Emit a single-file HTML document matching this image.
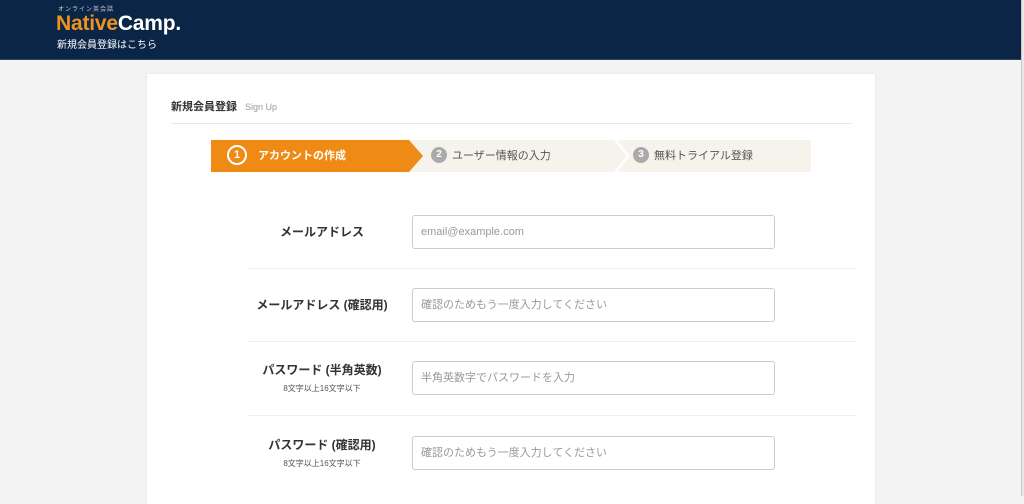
<!DOCTYPE html>
<html><head><meta charset="utf-8"><style>
*{margin:0;padding:0;box-sizing:border-box}
body{width:1024px;height:496px;overflow:hidden;background:#f3f3f3;font-family:"Liberation Sans","Noto Sans CJK JP",sans-serif;position:relative}
.hdr{position:absolute;left:0;top:0;width:1021px;height:60px;background:#0b2546;border-bottom:1px solid #30445e}
.sb{position:absolute;left:1021px;top:0;width:3px;height:496px;background:#e8e8e8;border-left:1px solid #c8c8c8}
.logo-s{position:absolute;left:58px;top:4px;font-size:6px;color:#ccd;letter-spacing:1px}
.logo{position:absolute;left:56px;top:12px;font-size:21px;font-weight:bold;color:#fff;letter-spacing:-0.2px}
.logo span{color:#f0931e}
.logo-t{position:absolute;left:57px;top:36px;font-size:10px;color:#fff}
.card{position:absolute;left:147px;top:74px;width:728px;height:430px;background:#fff;box-shadow:0 0 2px #ddd}
.ttl{position:absolute;left:24px;top:24px;font-size:11px;font-weight:bold;color:#333}
.ttl small{font-size:9px;font-weight:normal;color:#999;margin-left:8px}
.hr{position:absolute;left:24px;top:49px;width:680px;height:1px;background:#e8e8e8}
.steps{position:absolute;left:64px;top:66px;width:600px;height:32px;background:#f5f3ec}
.s1{position:absolute;left:0;top:0;width:212px;height:32px;background:#ef8a14;clip-path:polygon(0 0,198px 0,212px 16px,198px 32px,0 32px)}
.sep{position:absolute;left:403px;top:0;width:16px;height:32px;background:#fff;clip-path:polygon(0 0,3px 0,16px 16px,3px 32px,0 32px,13px 16px)}
.st{position:absolute;top:0;height:32px;line-height:32px;font-size:11px;color:#555}
.c{display:inline-block;width:16px;height:16px;border-radius:50%;background:#aaa;color:#fff;font-size:10px;line-height:16px;text-align:center;font-weight:bold;vertical-align:middle;margin-right:5px;margin-top:-2px}
.c1{display:inline-block;width:20px;height:20px;border-radius:50%;border:2px solid #fff;color:#fff;font-size:11px;line-height:16px;text-align:center;vertical-align:middle;margin-right:11px;margin-top:-2px}
.lbl{position:absolute;left:0;width:150px;text-align:center;font-size:12px;font-weight:bold;color:#333}
.lbl small{display:block;font-size:8px;font-weight:normal;color:#555;margin-top:5px}
.inp{position:absolute;width:363px;height:34px;border:1px solid #ccc;border-radius:3px;font-size:11px;color:#999;line-height:32px;padding-left:8px}
.line{position:absolute;left:100px;width:610px;height:1px;background:#f0f0f0}
</style></head><body>
<div class="hdr">
<div class="logo-s">オンライン英会話</div>
<div class="logo"><span>Native</span>Camp.</div>
<div class="logo-t">新規会員登録はこちら</div>
</div>
<div class="sb"></div>
<div class="card">
<div class="ttl">新規会員登録<small>Sign Up</small></div>
<div class="hr"></div>
<div class="steps">
<div class="s1"></div>
<div class="sep"></div>
<div class="st" style="left:16px;color:#fff;font-weight:bold"><span class="c1">1</span>アカウントの作成</div>
<div class="st" style="left:220px"><span class="c">2</span>ユーザー情報の入力</div>
<div class="st" style="left:422px"><span class="c">3</span>無料トライアル登録</div>
</div>
<div class="lbl" style="left:100px;top:149px">メールアドレス</div>
<div class="inp" style="left:265px;top:141px">email@example.com</div>
<div class="line" style="top:194px"></div>
<div class="lbl" style="left:100px;top:222px">メールアドレス (確認用)</div>
<div class="inp" style="left:265px;top:214px">確認のためもう一度入力してください</div>
<div class="line" style="top:267px"></div>
<div class="lbl" style="left:100px;top:287px">パスワード (半角英数)<small>8文字以上16文字以下</small></div>
<div class="inp" style="left:265px;top:287px">半角英数字でパスワードを入力</div>
<div class="line" style="top:341px"></div>
<div class="lbl" style="left:100px;top:362px">パスワード (確認用)<small>8文字以上16文字以下</small></div>
<div class="inp" style="left:265px;top:362px">確認のためもう一度入力してください</div>
</div>
</body></html>
